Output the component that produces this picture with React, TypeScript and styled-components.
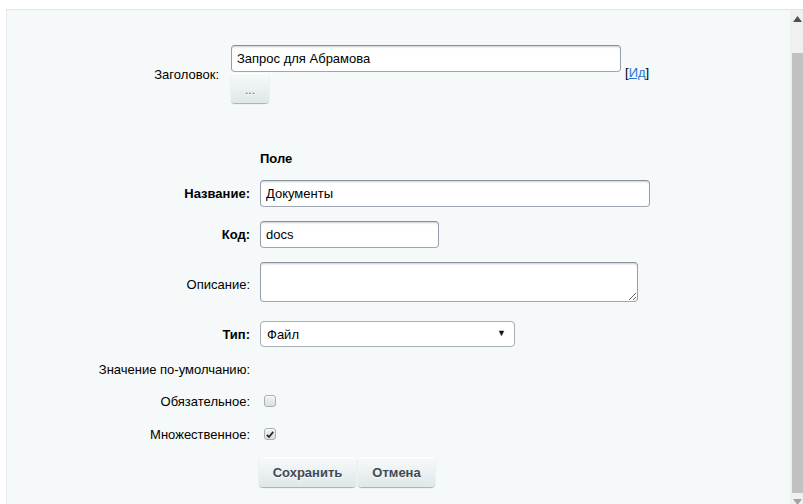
import styled, { createGlobalStyle } from 'styled-components'

const GlobalStyle = createGlobalStyle`
  html, body {
    margin: 0;
    padding: 0;
    background: #fff;
    overflow: hidden;
  }
  body {
    font-family: "Liberation Sans", Arial, sans-serif;
    font-size: 13px;
    color: #000;
  }
`

const Checkbox: React.FC<{ checked?: boolean }> = ({ checked }) => (
  <CheckBox>
    {checked && (
      <svg width='8' height='7' viewBox='0 0 8 7'>
        <path d='M0.8 3.8 L3 6 L7.2 0.9' fill='none' stroke='#2b2b2b' strokeWidth='1.8' />
      </svg>
    )}
  </CheckBox>
)

const App = () => {
  return (
    <>
      <GlobalStyle />
      <Frame>
        <Content>
          <TitleRow>
            <Label>Заголовок:</Label>
            <TitleField>
              <TextInput defaultValue='Запрос для Абрамова' $width={390} />
              <DotsButton type='button'>...</DotsButton>
            </TitleField>
            <IdLink>
              [<a href='#'>Ид</a>]
            </IdLink>
          </TitleRow>

          <Row $mt={45} $h={20}>
            <span />
            <Heading>Поле</Heading>
          </Row>

          <Row $mt={12}>
            <Label $bold>Название:</Label>
            <TextInput defaultValue='Документы' $width={390} />
          </Row>

          <Row $mt={14}>
            <Label $bold>Код:</Label>
            <TextInput defaultValue='docs' $width={179} />
          </Row>

          <Row $mt={14}>
            <Label $shift={5}>Описание:</Label>
            <TextArea />
          </Row>

          <Row $mt={19}>
            <Label $bold>Тип:</Label>
            <SelectBox>
              <span>Файл</span>
              <Arrow>▼</Arrow>
            </SelectBox>
          </Row>

          <Row $mt={14} $h={16}>
            <Label>Значение по-умолчанию:</Label>
            <span />
          </Row>

          <Row $mt={14} $h={20}>
            <Label>Обязательное:</Label>
            <CheckCell>
              <Checkbox />
            </CheckCell>
          </Row>

          <Row $mt={13} $h={20}>
            <Label>Множественное:</Label>
            <CheckCell>
              <Checkbox checked />
            </CheckCell>
          </Row>

          <Row $mt={13}>
            <span />
            <Buttons>
              <Button type='button' $width={97}>Сохранить</Button>
              <Button type='button' $width={77}>Отмена</Button>
            </Buttons>
          </Row>
        </Content>

        <Scrollbar>
          <ScrollArrow>
            <svg width='9' height='6' viewBox='0 0 9 6'>
              <polygon points='0,6 9,6 4.5,0' fill='#505050' />
            </svg>
          </ScrollArrow>
          <Track>
            <Thumb />
          </Track>
          <ScrollArrow>
            <svg width='9' height='6' viewBox='0 0 9 6'>
              <polygon points='0,0 9,0 4.5,6' fill='#a3a3a3' />
            </svg>
          </ScrollArrow>
        </Scrollbar>
      </Frame>
    </>
  )
}

const Frame = styled.div`
  display: flex;
  margin: 9px 0 0 6px;
  height: 495px;
  border-top: 1px solid #dbe5e8;
  border-left: 1px solid #e4ecee;
  box-sizing: border-box;
  overflow: hidden;
`

const Content = styled.div`
  flex: 1;
  background: #f5f9f9;
  padding-top: 35px;
`

const TitleRow = styled.div`
  display: grid;
  grid-template-columns: 212px 390px auto;
  column-gap: 12px;
  align-items: center;
`

const TitleField = styled.div`
  display: flex;
  flex-direction: column;
  align-items: flex-start;
`

const IdLink = styled.span`
  margin-left: -8px;
  margin-top: -4px;

  a {
    color: #2675d7;
    text-decoration: underline;
  }
`

const Row = styled.div<{ $mt: number; $h?: number }>`
  display: grid;
  grid-template-columns: 243px 1fr;
  column-gap: 10px;
  align-items: center;
  margin-top: ${(p) => p.$mt}px;
  min-height: ${(p) => (p.$h ? `${p.$h}px` : 'auto')};
`

const Label = styled.label<{ $bold?: boolean; $shift?: number }>`
  text-align: right;
  font-weight: ${(p) => (p.$bold ? 'bold' : 'normal')};
  white-space: nowrap;
  padding-top: ${(p) => p.$shift ?? 0}px;
`

const Heading = styled.span`
  font-weight: bold;
`

const fieldBorder = `
  border: 1px solid;
  border-color: #87919c #959ea9 #9ea7b1 #959ea9;
  border-radius: 4px;
  box-shadow: 0 1px 0 0 rgba(255, 255, 255, 0.3), inset 0 2px 2px -1px rgba(180, 188, 191, 0.7);
  background: #fff;
  box-sizing: border-box;
`

const TextInput = styled.input<{ $width: number }>`
  ${fieldBorder}
  width: ${(p) => p.$width}px;
  height: 27px;
  padding: 0 5px;
  font-family: "Liberation Sans", Arial, sans-serif;
  font-size: 13px;
  color: #000;
  outline: none;
`

const TextArea = styled.textarea`
  ${fieldBorder}
  display: block;
  width: 378px;
  height: 40px;
  padding: 4px 5px;
  font-family: "Liberation Sans", Arial, sans-serif;
  font-size: 13px;
  outline: none;
`

const SelectBox = styled.div`
  ${fieldBorder}
  position: relative;
  display: flex;
  align-items: center;
  width: 255px;
  height: 26px;
  padding: 0 6px;
  box-shadow: none;
  border-color: #a6adb3;
`

const Arrow = styled.span`
  position: absolute;
  right: 8px;
  top: 6px;
  font-size: 9px;
  color: #111;
`

const CheckCell = styled.div`
  display: flex;
  align-items: center;
  padding-left: 4px;
`

const CheckBox = styled.span`
  display: inline-flex;
  align-items: center;
  justify-content: center;
  width: 12px;
  height: 12px;
  box-sizing: border-box;
  border: 1px solid #a8afb4;
  border-radius: 3px;
  background: linear-gradient(to bottom, #f1f3f4, #dcdfe1);
  box-shadow: inset 0 1px 0 #fff;
`

const Buttons = styled.div`
  display: flex;
  gap: 2px;
  margin-left: -1px;
`

const btnLook = `
  border: none;
  border-radius: 4px;
  background: linear-gradient(to bottom, #f8fafa, #dfe7ea);
  box-shadow: 0 0 1px rgba(0, 0, 0, 0.11), 0 1px 1px rgba(0, 0, 0, 0.3), inset 0 1px #fff, inset 0 0 1px rgba(255, 255, 255, 0.5);
  color: #3f4b54;
  font-family: "Liberation Sans", Arial, sans-serif;
  text-shadow: 0 1px rgba(255, 255, 255, 0.7);
  cursor: pointer;
  padding: 0;
`

const Button = styled.button<{ $width: number }>`
  ${btnLook}
  width: ${(p) => p.$width}px;
  height: 30px;
  font-size: 13px;
  font-weight: bold;
`

const DotsButton = styled.button`
  ${btnLook}
  width: 38px;
  height: 30px;
  margin-top: 1px;
  padding-top: 3px;
  font-size: 12px;
  color: #5b666e;
`

const Scrollbar = styled.div`
  display: flex;
  flex-direction: column;
  width: 13px;
  background: #f0f0f0;
`

const ScrollArrow = styled.div`
  display: flex;
  align-items: center;
  justify-content: center;
  flex-shrink: 0;
  height: 17px;
  padding-left: 2px;
`

const Track = styled.div`
  flex: 1;
  display: flex;
  flex-direction: column;
  padding-left: 2px;
`

const Thumb = styled.div`
  margin-top: 26px;
  height: 440px;
  flex-shrink: 0;
  background: #c1c1c1;
`

export default App
